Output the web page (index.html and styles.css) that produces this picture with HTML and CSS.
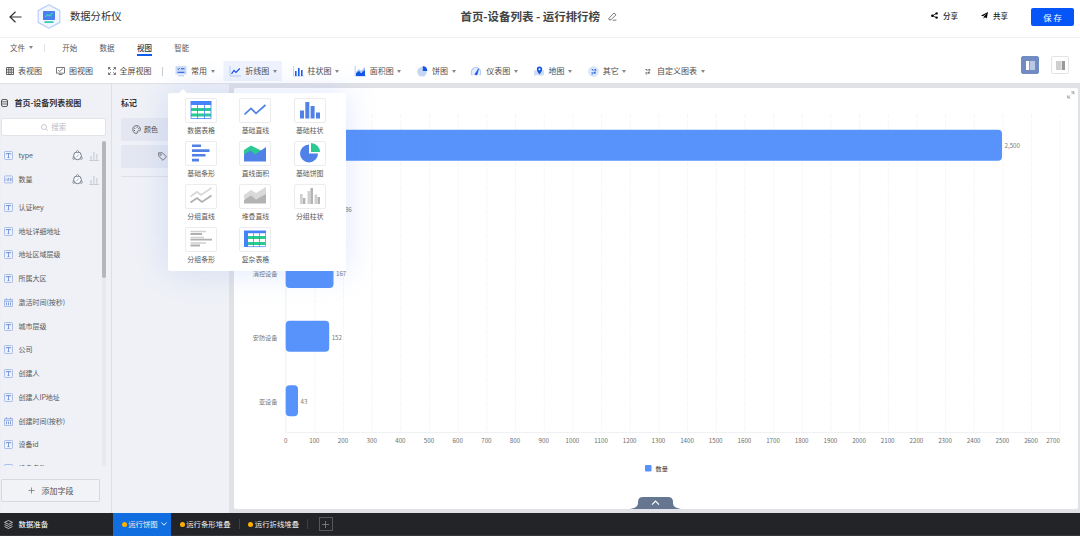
FILE: index.html
```html
<!DOCTYPE html>
<html lang="zh-CN">
<head>
<meta charset="utf-8">
<title>数据分析仪</title>
<link rel="stylesheet" href="styles.css">
</head>
<body>
<svg width="0" height="0" class="defs">
  <symbol id="text-field" viewBox="0 0 9 9"><rect x=".5" y=".5" width="8" height="8" rx=".8" fill="#edf2fc" stroke="#9bb3e2" stroke-width=".8"/><path d="M2.3 3.4V2.5h4.4v.9M4.5 2.5v4M3.6 6.6h1.8" fill="none" stroke="#5f83cc" stroke-width=".8"/></symbol>
  <symbol id="num-field" viewBox="0 0 9 9"><rect x=".5" y=".9" width="8" height="7" rx=".6" fill="#edf2fc" stroke="#9bb3e2" stroke-width=".8"/><path d="M2 3.3v2.4M3.6 3.3h1.3v1.2H3.6v1.2h1.3M5.8 3.3h1.3v2.4H5.8M6 4.5h1" fill="none" stroke="#5f83cc" stroke-width=".6"/></symbol>
  <symbol id="date-field" viewBox="0 0 9 9"><path d="M.5 1.5h8v7h-8z" fill="#edf2fc" stroke="#9bb3e2" stroke-width=".8"/><path d="M.5 3.2h8M2.5.3v1.6M6.5.3v1.6" stroke="#7f9bd8" stroke-width=".8"/><path d="M2.5 4.5v2.8M4.5 4.5v2.8M6.5 4.5v2.8" stroke="#7f9bd8" stroke-width="1"/></symbol>
  <symbol id="link-ring" viewBox="0 0 11 11"><circle cx="5.5" cy="5.8" r="3.9" fill="#fff" stroke="#666b75" stroke-width=".9"/><circle cx="5.500" cy="1.700" r="1.100" fill="#fff" stroke="#666b75" stroke-width=".7"/><circle cx="1.800" cy="8.200" r="1.100" fill="#fff" stroke="#666b75" stroke-width=".7"/><circle cx="9.200" cy="8.200" r="1.100" fill="#fff" stroke="#666b75" stroke-width=".7"/><path d="M4 7.400l3-3" stroke="#7ba0e8" stroke-width=".8"/></symbol>
  <symbol id="mini-bars" viewBox="0 0 10 10"><path d="M.3 9.4h9.4M2 8.500V5M4.900 8.500V.8M7.800 8.500V3" fill="none" stroke="#c3c6cd" stroke-width="1"/></symbol>
</svg>

<header class="header">
  <svg class="back" width="14" height="12" viewBox="0 0 14 12"><path d="M6.500.8L1 6l5.500 5.200M1.200 6H12.500" fill="none" stroke="#333" stroke-width="1.200"/></svg>
  <svg class="logo" width="24" height="25" viewBox="0 0 24 25"><path d="M12 .8L22.800 6.600v11.800L12 24.200 1.200 18.400V6.600z" fill="#f2f7ff" stroke="#b9d0fb" stroke-width="1.200" stroke-linejoin="round"/><rect x="6" y="7" width="12" height="9" rx=".6" fill="#4a80ee"/><path d="M8.300 12.800l2.200-2.100 2.200 1.300 3-3.200" fill="none" stroke="#38d8ba" stroke-width="1.100"/><path d="M7.500 17.200h9v1.800h-9z" fill="#36cbb0"/></svg>
  <span class="brand">数据分析仪</span>
  <h1 class="title">首页-设备列表 - 运行排行榜
    <svg width="9" height="9" viewBox="0 0 9 9"><path d="M1 6.200L6 1l2 1.800L3 7.800H1zM4.800 8.200h3.600" fill="none" stroke="#555" stroke-width=".8"/></svg>
  </h1>
  <div class="actions">
    <span class="action"><svg width="7" height="7" viewBox="0 0 7 7"><path d="M5.600 1.500L1.400 3.700l4.200 1.900" fill="none" stroke="#222" stroke-width=".9"/><circle cx="5.600" cy="1.400" r="1.200"/><circle cx="1.400" cy="3.700" r="1.300"/><circle cx="5.600" cy="5.600" r="1.200"/></svg>分享</span>
    <span class="action"><svg width="7" height="7" viewBox="0 0 7 7"><path d="M7 0L5.800 6.200 3.800 5.200 2.700 7V4.700L5.800 1.500 1.900 4.300 0 3.500z"/></svg>共享</span>
    <button class="save">保 存</button>
  </div>
</header>

<nav class="menu">
  <span class="menu-file">文件<i class="caret"></i></span><i class="menu-sep"></i>
  <span>开始</span><span>数据</span><span class="current">视图</span><span>智能</span>
</nav>

<div class="toolbar">
  <div class="views">
    <span class="view"><svg width="8" height="8" viewBox="0 0 8 8"><path d="M.5.5h7v7h-7zM.5 2.800h7M.5 5.200h7M2.800.5v7M5.200.5v7" fill="none" stroke="#555" stroke-width=".9"/></svg>表视图</span>
    <span class="view v2"><svg width="9" height="8" viewBox="0 0 9 8"><path d="M.5.5h8v5.700h-8zM2.800 7.500h3.600M2.200 3.400l1.500 1 3.200-2.800" fill="none" stroke="#555" stroke-width=".8"/></svg>图视图</span>
    <span class="view v3"><svg width="8" height="8" viewBox="0 0 8 8"><path d="M.5 2.500v-2h2M5.500.5h2v2M7.500 5.500v2h-2M2.500 7.500h-2v-2M.8.8l2 2M7.200.8l-2 2M7.200 7.200l-2-2M.8 7.200l2-2" fill="none" stroke="#555" stroke-width=".8"/></svg>全屏视图</span>
  </div>
  <i class="tool-sep"></i>
  <div class="charts">
    <span class="chart-kind"><svg width="12" height="11" viewBox="0 0 12 11"><path d="M.5 0h11v8.500H.5zM3 9h6v1.500H3z" fill="#cfdcf5"/><path d="M2.500 2.800l.8.8 1.300-1.500M6 2.800h3.500M2.500 6.300h7" fill="none" stroke="#1457e6" stroke-width="1"/></svg>常用<i class="caret"></i></span>
    <span class="chart-kind active"><svg width="12" height="11" viewBox="0 0 12 11"><path d="M1 0v10h11" fill="none" stroke="#b9cdf3"/><path d="M2.500 7.800L5 4.500l2 2 3.800-4" fill="none" stroke="#1457e6" stroke-width="1.200"/></svg>折线图<i class="caret"></i></span>
    <span class="chart-kind"><svg width="12" height="11" viewBox="0 0 12 11"><path d="M1.500 0v10H12" fill="none" stroke="#c6d6f5"/><path d="M3 5h1.600v5H3zM6 2h1.600v8H6zM9 4h1.600v6H9z" fill="#1c5eea"/></svg>柱状图<i class="caret"></i></span>
    <span class="chart-kind"><svg width="12" height="11" viewBox="0 0 12 11"><path d="M1.200 0v10H12" fill="none" stroke="#b9cdf3"/><path d="M2 6l3-3 2 2 4-4v5z" fill="#a9c2f4"/><path d="M2 7l3-2 2 2 4-3v6H2z" fill="#1457e6"/></svg>面积图<i class="caret"></i></span>
    <span class="chart-kind"><svg width="12" height="11" viewBox="0 0 12 11"><circle cx="6" cy="5.800" r="4.800" fill="#c6d6f5"/><path d="M6.800 0a5 5 0 0 1 4.500 5H6.800z" fill="#1457e6"/></svg>饼图<i class="caret"></i></span>
    <span class="chart-kind"><svg width="12" height="11" viewBox="0 0 12 11"><path d="M2.300 9.300a4.700 4.700 0 1 1 7.400 0" fill="#e8effc" stroke="#b5caf5" stroke-width="1.200"/><path d="M4.800 8.500L8.500 2.800 7 8.800z" fill="#1457e6" stroke="#1457e6" stroke-width=".7"/></svg>仪表图<i class="caret"></i></span>
    <span class="chart-kind"><svg width="12" height="11" viewBox="0 0 12 11"><path d="M1 4l4 1 6-1v5l-3 1-4-1-3 1z" fill="#d2def6"/><path d="M6.500 8.500C5 6.400 3.800 5 3.800 3.200a2.700 2.700 0 0 1 5.400 0C9.200 5 8 6.400 6.500 8.500z" fill="#1457e6"/><circle cx="6.500" cy="3.200" r="1" fill="#fff"/></svg>地图<i class="caret"></i></span>
    <span class="chart-kind"><svg width="12" height="11" viewBox="0 0 12 11"><circle cx="6.500" cy="5.500" r="4.800" fill="#e3ebfb" stroke="#c3d3f5" stroke-width=".7"/><path d="M4.500 3.500h1.500v1.500M7.300 3.500h1.500v1.500H7.300M4.500 6.500l4 1M4.500 8h1.500M7 6.500h1.800" fill="none" stroke="#1457e6" stroke-width=".8"/></svg>其它<i class="caret"></i></span>
    <span class="chart-kind"><svg width="12" height="11" viewBox="0 0 12 11"><path d="M4.500 3.500h1.500v1.500M7.300 3.500h1.500v1.500H7.300M4.500 6.500l4 1M4.500 8h1.500M7 6.500h1.800" fill="none" stroke="#555" stroke-width=".8"/></svg>自定义图表<i class="caret"></i></span>
  </div>
  <div class="layouts">
    <span class="layout on"><svg width="9" height="9" viewBox="0 0 9 9"><path d="M0 0h3v9H0z" fill="#fff"/><path d="M3.700 0H9v9H3.700z" fill="#bac9e6"/></svg></span>
    <span class="layout"><svg width="9" height="9" viewBox="0 0 9 9"><path d="M0 0h5v9H0z" fill="#cfcfcf"/><path d="M5.700 0H9v9H5.700z" fill="#999"/></svg></span>
  </div>
</div>

<main class="workspace">
  <aside class="fields">
    <h2 class="panel-title"><svg width="7" height="8" viewBox="0 0 7 8"><rect x=".5" y=".5" width="6" height="7" rx="1.500" fill="none" stroke="#333" stroke-width=".8"/><path d="M.5 2.800h6M.5 5h6" stroke="#333" stroke-width=".7"/></svg>首页-设备列表视图</h2>
    <div class="search"><svg width="7" height="7" viewBox="0 0 7 7"><circle cx="3" cy="3" r="2.500" fill="none" stroke="#b9bcc3" stroke-width=".8"/><path d="M5 5l1.700 1.700" stroke="#b9bcc3" stroke-width=".8"/></svg>搜索</div>
    <div class="field-scroll">
      <ul class="field-list">
        <li><svg class="kind"><use href="#text-field"/></svg>type<svg class="ring"><use href="#link-ring"/></svg><svg class="bars"><use href="#mini-bars"/></svg></li>
        <li class="group-end"><svg class="kind"><use href="#num-field"/></svg>数量<svg class="ring"><use href="#link-ring"/></svg><svg class="bars"><use href="#mini-bars"/></svg></li>
        <li><svg class="kind"><use href="#text-field"/></svg>认证key</li>
        <li><svg class="kind"><use href="#text-field"/></svg>地址详细地址</li>
        <li><svg class="kind"><use href="#text-field"/></svg>地址区域层级</li>
        <li><svg class="kind"><use href="#text-field"/></svg>所属大区</li>
        <li><svg class="kind"><use href="#date-field"/></svg>激活时间(按秒)</li>
        <li><svg class="kind"><use href="#text-field"/></svg>城市层级</li>
        <li><svg class="kind"><use href="#text-field"/></svg>公司</li>
        <li><svg class="kind"><use href="#text-field"/></svg>创建人</li>
        <li><svg class="kind"><use href="#text-field"/></svg>创建人IP地址</li>
        <li><svg class="kind"><use href="#date-field"/></svg>创建时间(按秒)</li>
        <li><svg class="kind"><use href="#text-field"/></svg>设备id</li>
        <li><svg class="kind"><use href="#text-field"/></svg>设备名称</li>
      </ul>
      <div class="track"><div class="thumb"></div></div>
    </div>
    <button class="add-field"><svg width="7" height="7" viewBox="0 0 7 7"><path d="M3.500 .5v6M.5 3.500h6" stroke="#777" stroke-width=".8"/></svg>添加字段</button>
  </aside>

  <section class="marks">
    <h2 class="panel-title">标记</h2>
    <div class="mark-grid">
      <span class="mark"><svg width="9" height="9" viewBox="0 0 9 9"><path d="M4.500.6a3.900 3.900 0 1 0 .5 7.800c1-.3-.2-1.500.5-2.200.8-.8 2.500.3 2.900-1A3.900 3.900 0 0 0 4.500.6z" fill="none" stroke="#555" stroke-width=".8"/><path d="M2 5.500h1M2.300 3.300h1M4.500 2.200h1M6.300 3.700h1" stroke="#555"/></svg>颜色</span>
      <span class="mark empty"></span>
      <span class="mark wide"><svg width="9" height="9" viewBox="0 0 9 9"><path d="M.6.8h3.800L8.400 4.800 5 8.300.8 4.200z" fill="none" stroke="#555" stroke-width=".8"/><circle cx="2.700" cy="2.800" r=".7" fill="none" stroke="#555" stroke-width=".6"/></svg>标签</span>
    </div>
    <hr class="mark-line">
  </section>

  <section class="canvas">
    <svg class="chart" width="844" height="421" viewBox="234 88 844 421">
      <defs><pattern id="grid" x="285.700" y="0" width="28.670" height="6" patternUnits="userSpaceOnUse"><path d="M.3 0v5" stroke="#eeeff1" stroke-width=".7"/></pattern></defs>
      <rect x="285.700" y="113" width="775" height="319" fill="url(#grid)"/>
      <path d="M285.700 113v319.500h774" fill="none" stroke="#eceef0" stroke-width=".8"/>
      <g fill="#5793fb">
        <rect x="285.700" y="129.700" width="716.300" height="31" rx="4"/>
        <rect x="285.700" y="193.700" width="53.300" height="31" rx="4"/>
        <rect x="285.700" y="257" width="47.800" height="31" rx="4"/>
        <rect x="285.700" y="320.700" width="43.500" height="31" rx="4"/>
        <rect x="285.700" y="385.200" width="12.300" height="31" rx="4"/>
      </g>
      <g class="value"><text x="1004.500" y="148">2,500</text><text x="341.500" y="212">186</text><text x="336" y="275.700">167</text><text x="331.700" y="339.500">152</text><text x="300.500" y="403.700">43</text></g>
      <g class="category"><text x="277.500" y="275.700">消控设备</text><text x="277.500" y="339.500">安防设备</text><text x="277.500" y="403.500">亚设备</text></g>
      <g class="tick">
        <text x="285.700" y="443">0</text><text x="314.400" y="443">100</text><text x="343" y="443">200</text><text x="371.700" y="443">300</text><text x="400.400" y="443">400</text><text x="429" y="443">500</text><text x="457.700" y="443">600</text><text x="486.400" y="443">700</text><text x="515" y="443">800</text><text x="543.700" y="443">900</text><text x="572.400" y="443">1000</text><text x="601" y="443">1100</text><text x="629.700" y="443">1200</text><text x="658.400" y="443">1300</text><text x="687" y="443">1400</text><text x="715.700" y="443">1500</text><text x="744.400" y="443">1600</text><text x="773" y="443">1700</text><text x="801.700" y="443">1800</text><text x="830.400" y="443">1900</text><text x="859" y="443">2000</text><text x="887.700" y="443">2100</text><text x="916.400" y="443">2200</text><text x="945" y="443">2300</text><text x="973.700" y="443">2400</text><text x="1002.400" y="443">2500</text><text x="1031" y="443">2600</text><text x="1053" y="443">2700</text>
      </g>
      <rect x="645" y="465" width="6.500" height="6.500" rx="1" fill="#5793fb"/><text class="legend" x="655.500" y="470.800">数量</text>
      <path d="M1071.500 94.200l2-2M1071.300 91.800h2.600v2.600M1070 95.500l-2 2M1070.300 97.900h-2.600v-2.600" fill="none" stroke="#999" stroke-width=".9"/>
      <path d="M630 509c6-1 8-3 8-6v-1q0-5 5-5h25q5 0 5 5v1c0 3 2 5 8 6z" fill="#667590"/><path d="M652 504.700l3.500-3.500 3.500 3.500" fill="none" stroke="#fff" stroke-width="1.200"/>
    </svg>
  </section>
</main>

<footer class="sheets">
  <span class="source"><svg width="9" height="9" viewBox="0 0 9 9"><path d="M4.500.5l4 1.900-4 1.900-4-1.900zM.5 4.400l4 2 4-2M.5 6.500l4 2 4-2" fill="none" stroke="#ddd" stroke-width=".8"/></svg>数据准备</span>
  <span class="sheet selected"><i class="dot"></i>运行饼图<svg width="6" height="4" viewBox="0 0 6 4"><path d="M.5.5L3 3.200 5.500.5" fill="none" stroke="#fff" stroke-width=".9"/></svg></span>
  <span class="sheet"><i class="dot"></i>运行条形堆叠</span>
  <span class="sheet"><i class="dot"></i>运行折线堆叠</span>
  <span class="new-sheet"><svg width="7" height="7" viewBox="0 0 7 7"><path d="M3.500 0v7M0 3.500h7" stroke="#888" stroke-width=".8"/></svg></span>
</footer>

<div class="picker">
  <figure><span class="tile"><svg width="22" height="18" viewBox="0 0 22 18"><path d="M1 0h20v18H1z" fill="#fff"/><path d="M.5 0h21v4H.5z" fill="#4683fb"/><path d="M1 7h20v3H1zM1 12.500h20v3H1z" fill="#2bca93"/><path d="M1 4v13.500h20V4M7.500 4v14M14.500 4v14" fill="none" stroke="#4683fb" stroke-width=".8"/></svg></span><figcaption>数据表格</figcaption></figure>
  <figure><span class="tile"><svg width="22" height="18" viewBox="0 0 22 18"><path d="M.5 13.500L7 7.500l5 4.800L21.500 4" fill="none" stroke="#4f81e6" stroke-width="1.700"/></svg></span><figcaption>基础直线</figcaption></figure>
  <figure><span class="tile"><svg width="22" height="18" viewBox="0 0 22 18"><path d="M1 9.500h4v8H1zM6.300 1h4v16.500h-4zM11.600 5h4v12.500h-4zM17 11.500h4v6h-4z" fill="#4f81e6"/></svg></span><figcaption>基础柱状</figcaption></figure>
  <figure><span class="tile"><svg width="22" height="18" viewBox="0 0 22 18"><path d="M2 .5h9v2.600H2zM2 5.300h17.500v2.600H2zM2 10h13.500v2.600H2zM2 14.800h7v2.600H2z" fill="#4f81e6"/></svg></span><figcaption>基础条形</figcaption></figure>
  <figure><span class="tile"><svg width="24" height="18" viewBox="0 0 24 18"><path d="M1 6l7-4.500L15 5l4 2v5H1z" fill="#2bca93"/><path d="M1 10.500l6.500-4L12 10.500l11-7.500v14.500H1z" fill="#4f81e6"/></svg></span><figcaption>直线面积</figcaption></figure>
  <figure><span class="tile"><svg width="22" height="20" viewBox="0 0 22 20"><path d="M10 1.500a9 9 0 1 0 9 9H10z" fill="#4f81e6"/><path d="M12 0a9 9 0 0 1 9 9h-9z" fill="#2bca93"/></svg></span><figcaption>基础饼图</figcaption></figure>
  <figure><span class="tile"><svg width="22" height="18" viewBox="0 0 22 18"><path d="M.5 9.500L7 4.800l4 3.200L21.500 1" fill="none" stroke="#d7d7d7" stroke-width="1.800"/><path d="M.5 15.500L7 11l5 4 9.500-6.500" fill="none" stroke="#b0b0b0" stroke-width="1.800"/></svg></span><figcaption>分组直线</figcaption></figure>
  <figure><span class="tile"><svg width="24" height="18" viewBox="0 0 24 18"><path d="M1 8l7-5 5 3 10-6v12H1z" fill="#d9d9d9"/><path d="M1 13l7-4.500 5 4L23 7v9.500H1z" fill="#b3b3b3"/></svg></span><figcaption>堆叠直线</figcaption></figure>
  <figure><span class="tile"><svg width="22" height="18" viewBox="0 0 22 18"><path d="M1 7h2.700v10H1zM8.500 4h2.700v13H8.500zM15.500 7.500h2.700V17h-2.700z" fill="#d0d0d0"/><path d="M3.900 11h2.500v6H3.900zM11.400 1H14v16h-2.600zM18.500 10H21v7h-2.500z" fill="#b3b3b3"/></svg></span><figcaption>分组柱状</figcaption></figure>
  <figure><span class="tile"><svg width="22" height="18" viewBox="0 0 22 18"><path d="M.5 1.500H16M.5 7.500H14M.5 13H16" stroke="#d0d0d0" stroke-width="1.600"/><path d="M.5 4H12M.5 9.700H22M.5 15.500H10" stroke="#b0b0b0" stroke-width="1.800"/></svg></span><figcaption>分组条形</figcaption></figure>
  <figure><span class="tile"><svg width="22" height="18" viewBox="0 0 22 18"><path d="M0 .5h22V17H0z" fill="#fff"/><path d="M3 6h18.500v3H3zM3 12h18.500v3H3z" fill="#2bca93"/><path d="M9.500 3v14M15.500 3v14M21.600 3v13.600H3" fill="none" stroke="#4683fb" stroke-width=".7"/><path d="M0 .5h22v2.700H4V17H0z" fill="#4683fb"/></svg></span><figcaption>复杂表格</figcaption></figure>
</div>
</body>
</html>
```
FILE: styles.css
```css
* { box-sizing: border-box; }
body {
  margin: 0;
  width: 1080px;
  height: 536px;
  overflow: hidden;
  display: flex;
  flex-direction: column;
  position: relative;
  background: #fff;
  color: #4d4d4d;
  font: 8px/12px "Noto Sans CJK SC", "Noto Sans", sans-serif;
}
svg { display: block; flex: none; }
h1, h2, ul, figure { margin: 0; padding: 0; }
i { display: block; flex: none; }
button { font-family: inherit; padding: 0; }
.defs { position: absolute; }
.caret { border: 2px solid transparent; border-top: 3px solid #888; border-bottom: 0; }

.header {
  height: 37.500px;
  flex: none;
  display: grid;
  grid-template-columns: 9px 14px 14px 24px 9px 390.500px 1fr auto;
  align-items: center;
  border-bottom: 1px solid #f0f0f0;
  padding-bottom: 3px;
}
.back { grid-column: 2; }
.logo { grid-column: 4; }
.brand { grid-column: 6; font-size: 10.300px; color: #333; margin-top: -1px; }
.title { grid-column: 7; display: flex; align-items: center; gap: 8.500px; margin-top: -1px; font-size: 11.450px; font-weight: 700; color: #444; white-space: nowrap; }
.title svg { margin-top: 1px; }
.actions { display: flex; align-items: center; padding-right: 6px; }
.action { display: flex; align-items: center; gap: 5px; margin: -2px 23px 0 0; font-size: 7.500px; font-weight: 500; color: #222; }
.save { width: 43px; height: 18px; border: 0; border-radius: 2px; background: #0655f8; color: #fff; font-size: 8.300px; }

.menu {
  height: 22.500px;
  flex: none;
  display: flex;
  align-items: center;
  gap: 22.400px;
  padding: 0 0 2px 10px;
  font-size: 7.500px;
  color: #5a5a5a;
}
.menu-file { display: flex; align-items: center; gap: 4px; }
.menu-sep { width: 1px; height: 8px; background: #e4e4e4; margin: 0 -5.600px 0 -11px; }
.current { height: 14px; border-bottom: 2px solid #0f5cf3; font-weight: 500; color: #333; margin-top: 2px; }

.toolbar { height: 23px; flex: none; display: flex; align-items: center; padding: 0 11px 1px 6px; }
.views { display: flex; align-items: center; width: 156px; }
.view { display: flex; align-items: center; gap: 4px; white-space: nowrap; }
.v2 { margin-left: 14px; }
.v3 { margin-left: 14.500px; }
.tool-sep { width: 1px; height: 9px; background: #ccc; }
.charts { display: flex; align-items: center; gap: 15.250px; margin-left: 12px; }
.chart-kind { display: flex; align-items: center; gap: 4px; height: 20px; white-space: nowrap; }
.chart-kind .caret { margin-left: -.5px; }
.chart-kind:not(:last-child) { margin-right: -.5px; }
.chart-kind.active { background: #f0f3fe; box-shadow: -5.500px 0 #f0f3fe, 5px 0 #f0f3fe; }
.layouts { display: flex; gap: 12px; margin: -12px 0 0 auto; }
.layout { width: 18px; height: 18px; display: grid; place-items: center; border: 1px solid #e3e3e3; border-radius: 2px; }
.layout.on { background: #718cc2; border-color: #718cc2; }

.workspace {
  height: 430px;
  flex: none;
  display: grid;
  grid-template-columns: 111.500px 117.500px 1fr;
  background: #eff1f6;
  box-shadow: inset 0 1px 1px #dfe1e7;
}
.panel-title { display: flex; align-items: center; gap: 6px; font-size: 8px; font-weight: 700; color: #303238; white-space: nowrap; line-height: 12px; }
.fields { border-right: 1px solid #dddfe5; padding: 14px 0 0 1.400px; }
.search { display: flex; align-items: center; justify-content: center; gap: 3px; width: 104.500px; height: 18px; margin-top: 9px; background: #fff; border: 1px solid #e1e3e8; border-radius: 2px; color: #babdc4; font-size: 7.500px; }
.field-scroll { display: flex; justify-content: space-between; height: 325px; margin-top: 5px; overflow: hidden; padding-right: 5px; }
.field-list { list-style: none; width: 97.200px; font-size: 7px; color: #5a5a5a; }
.field-list li { height: 23.750px; display: flex; align-items: center; padding-left: 2.500px; white-space: nowrap; }
.field-list li:first-child { margin-top: 2.500px; }
.group-end { margin-bottom: 4px; }
.kind { width: 9px; height: 9px; margin: 1px 5.500px 0 0; }
.ring { width: 11px; height: 11px; margin: 1px 0 0 auto; }
.bars { width: 10px; height: 10px; margin: 1px 0 0 6px; }
.track { width: 4px; background: #e8e9ec; }
.thumb { height: 137px; background: #b5b6b9; border-radius: 2px; }
.add-field { display: flex; align-items: center; justify-content: center; gap: 6px; width: 99px; height: 23px; margin-top: 12.500px; border: 1px solid #d8d9dd; border-radius: 1px; background: #f1f3f7; color: #555; font-size: 8px; }

.marks { padding: 14px 9px 0 9.500px; }
.mark-grid { display: grid; grid-template-columns: 48px 48px; gap: 4px 3px; margin-top: 8.500px; }
.mark { display: flex; align-items: center; justify-content: center; gap: 3px; height: 23px; background: #e4e7f1; border-radius: 2px; font-size: 7px; white-space: nowrap; }
.wide { grid-column: 1 / 3; }
.mark-line { margin: 8px 0 0; border: 0; border-top: 1px solid #dfe0e5; }

.canvas { background: #e1e2e7; padding: 5px 2px 4px 5px; }
.chart { background: #fff; border-radius: 2px; }
.chart text { font-family: "Noto Sans CJK SC", "Noto Sans", sans-serif; fill: #777; font-size: 6.200px; }
.category text { text-anchor: end; }
.tick text { text-anchor: middle; fill: #6c6c6c; }
.chart .legend { fill: #333; }

.sheets { height: 23px; flex: none; display: flex; align-items: center; background: #222427; border-bottom: 1px solid #34363a; color: #eee; font-size: 7.400px; white-space: nowrap; }
.source { display: flex; align-items: center; gap: 5.500px; width: 113px; padding-left: 4px; font-weight: 500; }
.sheet { display: flex; align-items: center; gap: 1.700px; height: 10px; padding: 0 8px 0 8.500px; border-right: 1px solid #3c3e42; }
.sheet.selected { width: 58px; height: 23px; border: 0; background: #116ee0; }
.sheet.selected svg { margin-left: 1.500px; }
.dot { width: 5px; height: 5px; border-radius: 50%; background: #ffb000; }
.new-sheet { display: grid; place-items: center; width: 14px; height: 14px; border: 1px solid #55575b; margin-left: 10.500px; }

.picker {
  position: absolute;
  left: 168px;
  top: 92.500px;
  width: 178px;
  height: 178.500px;
  display: grid;
  grid-template-columns: repeat(3, 54.300px);
  grid-auto-rows: 43px;
  padding: 5px 0 0 6px;
  background: #fff;
  border-radius: 2px;
  box-shadow: 0 0 32px rgba(90, 130, 240, .2);
}
.picker::before { content: ""; position: absolute; left: 11px; top: -4px; border: 4px solid transparent; border-top: 0; border-bottom-color: #fff; }
.picker figure { display: flex; flex-direction: column; align-items: center; }
.tile { display: grid; place-items: center; width: 32px; height: 25px; border: 1px solid #ececee; border-radius: 2px; }
.picker figcaption { font-size: 6.900px; line-height: 12px; margin-top: 1px; color: #5a5a5a; white-space: nowrap; }
```
